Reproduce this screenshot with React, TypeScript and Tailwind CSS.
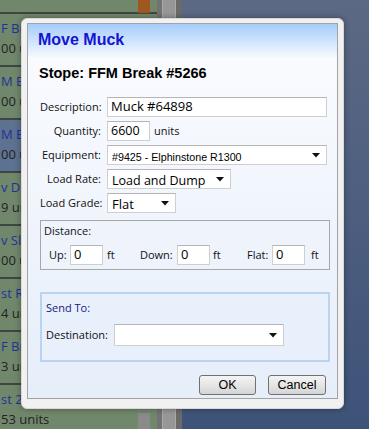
import React from 'react';

const ui = { fontFamily: '"Open Sans", "Noto Sans", sans-serif' };
const arial = { fontFamily: '"Liberation Sans", Arial, sans-serif' };

// list behind the dialog: only the left edge of each row shows
const rows = [
    { name: 'ock', sub: '00 units', hi: false, icon: 'bg-[#a0561f]' },
    { name: 'F Br', sub: '00 u', hi: false, icon: '' },
    { name: 'M Br', sub: '00 u', hi: false, icon: '' },
    { name: 'M Br', sub: '00 u', hi: true, icon: '' },
    { name: 'v Dr', sub: '9 un', hi: false, icon: '' },
    { name: 'v Sla', sub: '00 u', hi: false, icon: '' },
    { name: 'st Ro', sub: '4 un', hi: false, icon: '' },
    { name: 'F Br', sub: '3 un', hi: false, icon: '' },
    { name: 'st 2', sub: '53 units', hi: false, icon: 'bg-[#8a8a8a]' },
];

const Arrow = () => (
    <svg width="8" height="5" viewBox="0 0 8 5" className="shrink-0">
        <path d="M0 0h8L4 4.5z" fill="#111" />
    </svg>
);

const Field: React.FC<{ w: string; children?: React.ReactNode; h?: string }> = ({ w, children, h = 'h-[20px]' }) => (
    <div className={`${w} ${h} bg-white border border-[#cfcfcf] border-t-[#b5b5b5] flex items-center px-[3px] overflow-hidden whitespace-nowrap`}>
        {children}
    </div>
);

const Select: React.FC<{ w: string; children?: React.ReactNode; h?: string }> = ({ w, children, h = 'h-[20px]' }) => (
    <div className={`${w} ${h} bg-white border border-[#cfcfcf] border-t-[#b5b5b5] flex items-center justify-between pl-[4px] pr-[6px] overflow-hidden whitespace-nowrap`}>
        <div>{children}</div>
        <Arrow />
    </div>
);

const Label: React.FC<{ children: React.ReactNode }> = ({ children }) => (
    <div className="w-[61px] text-right text-[11px] text-[#111] whitespace-nowrap" style={ui}>{children}</div>
);

const App: React.FC = () => {
    return (
        <div className="relative w-[369px] h-[429px] overflow-hidden flex">
            {/* background list */}
            <div className="w-[157px] h-full bg-[#71876c] overflow-hidden">
                <div className="mt-[-39px]">
                    {rows.map((r, i) => (
                        <div
                            key={i}
                            className={`relative h-[53px] border-b-2 border-[#3f4540] ${r.hi ? 'bg-[#5d7190]' : 'bg-[#71876c]'}`}
                            style={ui}
                        >
                            <div className="pt-[4px] pl-[1px] text-[13px] leading-[20px] text-[#1c3596] whitespace-nowrap">{r.name}</div>
                            <div className="pl-[1px] text-[13px] leading-[20px] text-[#222] whitespace-nowrap">{r.sub}</div>
                            {r.icon && <div className={`absolute right-[7px] top-[28px] w-[12px] h-[24px] ${r.icon}`} />}
                        </div>
                    ))}
                </div>
            </div>
            {/* scroll bar */}
            <div className="w-[25px] h-full flex">
                <div className="w-[5px] bg-[#727272]" />
                <div className="w-[14px] bg-[#979797] border-x border-[#a9a9a9]" />
                <div className="w-[6px] bg-[#6a6a6a]" />
            </div>
            {/* desktop */}
            <div className="flex-1 h-full bg-gradient-to-b from-[#5c6984] via-[#4d5e7f] to-[#3e5379]" />

            {/* dialog */}
            <div className="absolute left-[21px] top-[18px] w-[323px] h-[391px] bg-[#f1f1f1] rounded-[6px] border border-[#d8d8d8] shadow-[0_0_6px_rgba(0,0,0,0.35)] pl-[5px] pr-[5px] pt-[4px] pb-[9px]">
                <div className="w-full h-full border border-[#a3a3a3] bg-gradient-to-b from-[#fbfcff] to-[#e6eefa] flex flex-col">
                    <div className="h-[33px] bg-gradient-to-b from-[#a4ccfa] to-[#f6f9fe] pl-[10px] pt-[7px]">
                        <div className="text-[16px] leading-[18px] font-bold text-[#1414d2]" style={arial}>Move Muck</div>
                    </div>
                    <div className="mt-[8px] pl-[11px] text-[14.5px] leading-[17px] font-bold text-black" style={arial}>
                        Stope: FFM Break #5266
                    </div>

                    <div className="mt-[15px] pl-[12px] flex flex-col gap-[4px]">
                        <div className="flex items-center gap-[6px]">
                            <Label>Description:</Label>
                            <Field w="w-[220px]"><span className="text-[13px] text-black" style={ui}>Muck #64898</span></Field>
                        </div>
                        <div className="flex items-center gap-[6px]">
                            <Label>Quantity:</Label>
                            <Field w="w-[43px]"><span className="text-[12.5px] text-black" style={ui}>6600</span></Field>
                            <span className="text-[11px] text-[#111] ml-[-2px]" style={ui}>units</span>
                        </div>
                        <div className="flex items-center gap-[6px]">
                            <Label>Equipment:</Label>
                            <Select w="w-[220px]"><span className="text-[10.7px] text-black" style={arial}>#9425 - Elphinstone R1300</span></Select>
                        </div>
                        <div className="flex items-center gap-[6px]">
                            <Label>Load Rate:</Label>
                            <Select w="w-[124px]"><span className="text-[12.5px] text-black" style={ui}>Load and Dump</span></Select>
                        </div>
                        <div className="flex items-center gap-[6px]">
                            <Label>Load Grade:</Label>
                            <Select w="w-[69px]"><span className="text-[13px] text-black" style={ui}>Flat</span></Select>
                        </div>
                    </div>

                    {/* distance */}
                    <div className="mt-[7px] ml-[12px] w-[290px] h-[50px] border border-[#a7a7a7] pl-[3px] pt-[1px]" style={ui}>
                        <div className="text-[11px] leading-[18px] text-[#111]">Distance:</div>
                        <div className="mt-[5px] flex items-center text-[11px] text-[#111]">
                            <span className="ml-[5px] w-[21px]">Up:</span>
                            <Field w="w-[33px]"><span className="text-[13px] text-black">0</span></Field>
                            <span className="ml-[4px] w-[33px]">ft</span>
                            <span className="w-[37px]">Down:</span>
                            <Field w="w-[33px]"><span className="text-[13px] text-black">0</span></Field>
                            <span className="ml-[3px] w-[34px]">ft</span>
                            <span className="w-[25px]">Flat:</span>
                            <Field w="w-[33px]"><span className="text-[13px] text-black">0</span></Field>
                            <span className="ml-[6px]">ft</span>
                        </div>
                    </div>

                    {/* send to */}
                    <div className="mt-[22px] ml-[12px] w-[290px] h-[70px] border-2 border-[#bad3f1] bg-[#e8f0fc] pl-[4px] pt-[5px]" style={ui}>
                        <div className="text-[11px] leading-[18px] text-[#161680]">Send To:</div>
                        <div className="mt-[7px] flex items-center gap-[4px]">
                            <span className="w-[64px] text-[11px] text-[#111]">Destination:</span>
                            <Select w="w-[170px]" h="h-[22px]" />
                        </div>
                    </div>

                    {/* buttons */}
                    <div className="mt-[13px] pr-[11px] flex justify-end gap-[12px]" style={arial}>
                        <button className="w-[57px] h-[20px] rounded-[3px] border border-[#707070] bg-gradient-to-b from-[#f4f4f4] via-[#e6e6e6] to-[#d4d4d4] text-[12.5px] text-black leading-none">OK</button>
                        <button className="w-[58px] h-[20px] rounded-[3px] border border-[#707070] bg-gradient-to-b from-[#f4f4f4] via-[#e6e6e6] to-[#d4d4d4] text-[12.5px] text-black leading-none">Cancel</button>
                    </div>
                </div>
            </div>
        </div>
    );
};

export default App;
